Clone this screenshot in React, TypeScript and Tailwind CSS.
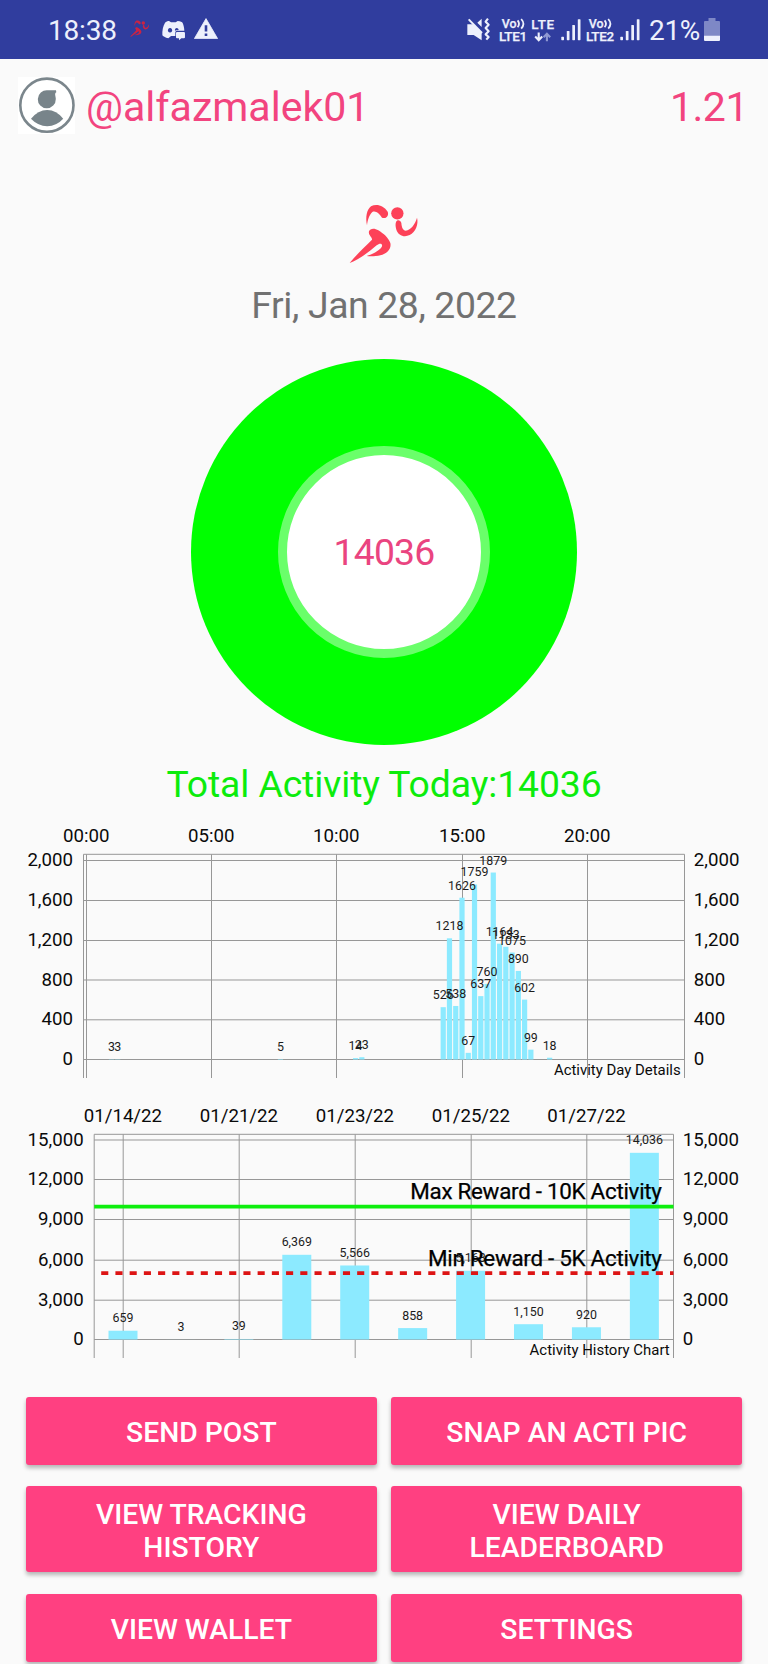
import { ReactNode } from 'react';

interface BarEntry {
  slot: number;
  value: number;
}

interface AxisTick {
  y: number;
  label: string;
}

interface TimeTick {
  x: number;
  label: string;
}

interface LimitLine {
  y: number;
  label: string;
  color: string;
  dashed?: boolean;
}

interface ActivityChartProps {
  entries: BarEntry[];
  firstX: number;
  slotWidth: number;
  barWidth: number;
  pxPerUnit: number;
  left: number;
  right: number;
  yTicks: AxisTick[];
  xTicks: TimeTick[];
  limits?: LimitLine[];
  description: string;
  labelGap: number;
  grouped?: boolean;
}

// Steps per 15 minute slot of the day
const dayEntries: BarEntry[] = [
  { slot: 4, value: 3 },
  { slot: 5, value: 3 },
  { slot: 31, value: 5 },
  { slot: 43, value: 14 },
  { slot: 44, value: 23 },
  { slot: 57, value: 526 },
  { slot: 58, value: 1218 },
  { slot: 59, value: 538 },
  { slot: 60, value: 1626 },
  { slot: 61, value: 67 },
  { slot: 62, value: 1759 },
  { slot: 63, value: 637 },
  { slot: 64, value: 760 },
  { slot: 65, value: 1879 },
  { slot: 66, value: 1164 },
  { slot: 67, value: 1133 },
  { slot: 68, value: 1075 },
  { slot: 69, value: 890 },
  { slot: 70, value: 602 },
  { slot: 71, value: 99 },
  { slot: 74, value: 18 }
];

const historyEntries: BarEntry[] = [659, 3, 39, 6369, 5566, 858, 5168, 1150, 920, 14036].map(
  (value, slot) => ({ slot, value })
);

const dayYTicks: AxisTick[] = [
  { y: 50.5, label: '2,000' },
  { y: 90.5, label: '1,600' },
  { y: 130.5, label: '1,200' },
  { y: 170, label: '800' },
  { y: 209.8, label: '400' },
  { y: 249.5, label: '0' }
];

const historyYTicks: AxisTick[] = [
  { y: 50, label: '15,000' },
  { y: 89.5, label: '12,000' },
  { y: 129.5, label: '9,000' },
  { y: 170.2, label: '6,000' },
  { y: 210.2, label: '3,000' },
  { y: 249.5, label: '0' }
];

const dayXTicks: TimeTick[] = [
  { x: 86.5, label: '00:00' },
  { x: 211.5, label: '05:00' },
  { x: 336.5, label: '10:00' },
  { x: 462.5, label: '15:00' },
  { x: 587.5, label: '20:00' }
];

const historyXTicks: TimeTick[] = [
  { x: 123.2, label: '01/14/22' },
  { x: 239.2, label: '01/21/22' },
  { x: 355.2, label: '01/23/22' },
  { x: 471.2, label: '01/25/22' },
  { x: 586.8, label: '01/27/22' }
];

const historyLimits: LimitLine[] = [
  { y: 116.6, label: 'Max Reward - 10K Activity', color: '#0eee0e' },
  { y: 183.1, label: 'Min Reward - 5K Activity', color: '#dd1414', dashed: true }
];

const BASELINE = 249.5;

const ActivityChart = ({
  entries,
  firstX,
  slotWidth,
  barWidth,
  pxPerUnit,
  left,
  right,
  yTicks,
  xTicks,
  limits = [],
  description,
  labelGap,
  grouped = false
}: ActivityChartProps) => {
  return (
    <svg width="768" height="280" viewBox="0 0 768 280" className="block">
      {/* grid */}
      <g stroke="#979797" strokeWidth="1">
        <path d={`M${left} 268V44.3H${right}V268`} fill="none" />
        {yTicks.map((tick) => (
          <line key={tick.label} x1={left} x2={right} y1={tick.y} y2={tick.y} />
        ))}
        {xTicks.map((tick) => (
          <line key={tick.label} x1={tick.x} x2={tick.x} y1={44.3} y2={268} />
        ))}
      </g>

      {/* bars */}
      {entries.map(({ slot, value }) => (
        <rect
          key={slot}
          x={firstX + slot * slotWidth - barWidth / 2}
          y={BASELINE - value * pxPerUnit}
          width={barWidth}
          height={value * pxPerUnit}
          fill="#8ceaff"
        />
      ))}

      {/* axis labels */}
      <g fontSize="18.67" fill="#0a0a0a">
        {xTicks.map((tick) => (
          <text key={tick.label} x={tick.x - 0.3} y={32} textAnchor="middle">
            {tick.label}
          </text>
        ))}
        {yTicks.map((tick) => (
          <text key={tick.label} x={left - 10.5} y={tick.y + 5.6} textAnchor="end">
            {tick.label}
          </text>
        ))}
        {yTicks.map((tick) => (
          <text key={tick.label} x={right + 9.3} y={tick.y + 5.6}>
            {tick.label}
          </text>
        ))}
      </g>

      {/* values */}
      <g fontSize="12.4" fill="#1c1c1c" textAnchor="middle">
        {entries.map(({ slot, value }) => (
          <text key={slot} x={firstX + slot * slotWidth} y={BASELINE - value * pxPerUnit - labelGap}>
            {grouped ? value.toLocaleString('en-US') : value}
          </text>
        ))}
      </g>

      {limits.map((limit) => (
        <g key={limit.label}>
          <line
            x1={limit.dashed ? left + 7 : left}
            x2={right}
            y1={limit.y}
            y2={limit.y}
            stroke={limit.color}
            strokeWidth="3.7"
            strokeDasharray={limit.dashed ? '7.1 7.12' : undefined}
          />
          <text
            x={right - 11.8}
            y={limit.y - 7.2}
            textAnchor="end"
            fontSize="22.4"
            letterSpacing="-0.28"
            fill="#000"
            stroke="#000"
            strokeWidth="0.25"
          >
            {limit.label}
          </text>
        </g>
      ))}

      <text x={right - 3.8} y={265} textAnchor="end" fontSize="14.93" fill="#0a0a0a">
        {description}
      </text>
    </svg>
  );
};

const RunnerIcon = ({ className }: { className: string }) => (
  <svg viewBox="355 38 215 185" fill="currentColor" className={className}>
    <circle cx="503" cy="69" r="18.5" />
    <path d="M412 105C407 80 411 58 424 48C440 39 462 45 474 64C479 76 468 87 457 82C449 70 438 60 428 65C418 74 414 90 412 105Z" />
    <path d="M499 95C502 88 512 88 515 98C516 112 520 120 528 121C544 118 556 102 562 82C567 102 558 124 540 134C524 142 506 136 500 118C497 108 497 100 499 95Z" />
    <path d="M418 123C421 114 434 112 446 120C462 130 476 142 482 158C486 176 472 190 452 195C440 198 420 199 411 197C428 191 446 184 456 170C461 159 450 157 441 165C424 180 392 206 360 218C378 196 402 172 427 148C428 140 415 134 418 123Z" />
  </svg>
);

const DiscordIcon = () => (
  <svg viewBox="485 60 71 62" fill="currentColor" className="h-[20.6px] w-[23.7px]">
    <path
      fillRule="evenodd"
      d="M506 63L512 67H526L532 63C540 64 546 66 547 69C550 76 552 84 552 92H530Q525 92 525 97V108H512L504 115C495 113 487 109 486 106C485 92 488 78 494 68C497 65 502 63 506 63ZM509 84a6.5 7 0 1 0 0.1 0ZM530 84a6 6 0 0 0-6 8l4-1 7-1a6 6 0 0 0-5-6Z"
    />
    <path d="M530 96H551Q554 96 554 99V112Q554 115 551 115H543L536 121V115H530Q527 115 527 112V99Q527 96 530 96Z" />
  </svg>
);

const WarningIcon = () => (
  <svg viewBox="0 0 24 21" className="h-[21px] w-6">
    <path d="M12 .6L23.6 20.6H.4Z" fill="currentColor" stroke="currentColor" strokeWidth=".8" strokeLinejoin="round" />
    <path d="M12 7.2V13.4M12 15.4V18" stroke="#303d9e" strokeWidth="2.6" />
  </svg>
);

const MuteVibrateIcon = () => (
  <svg viewBox="248 54 70 68" className="h-[22.7px] w-[23.3px]">
    <path d="M249 73H266L292 96V121L268 105H249ZM279 68L292 56V81Z" fill="currentColor" />
    <path d="M253 58L293 99" stroke="currentColor" strokeWidth="6" />
    <path
      d="M311 56L304 65L313 74L304 84L313 94L304 103L313 111L306 119"
      fill="none"
      stroke="currentColor"
      strokeWidth="6.5"
      strokeLinejoin="round"
    />
  </svg>
);

const SignalIcon = () => (
  <svg viewBox="0 0 20 22" fill="currentColor" className="h-[22px] w-5">
    <rect x="0.3" y="17.8" width="2.7" height="3.4" rx=".6" />
    <rect x="5.8" y="12" width="2.7" height="9.2" rx=".6" />
    <rect x="11.3" y="6" width="2.7" height="15.2" rx=".6" />
    <rect x="16.8" y="0.2" width="2.7" height="21" rx=".6" />
  </svg>
);

const VolteBadge = ({ label }: { label: string }) => (
  <svg viewBox="0 0 30 24" width="30" height="24" fill="currentColor" fontWeight="500" className="overflow-visible">
    <text x="2.8" y="10" fontSize="12.4" stroke="currentColor" strokeWidth=".25">
      Vo
    </text>
    <path
      d="M18.6 2.4Q21.4 5.8 18.6 9.2M22.2 1Q26.6 5.8 22.2 10.6"
      fill="none"
      stroke="currentColor"
      strokeWidth="1.8"
    />
    <text x="0" y="22.6" fontSize="13.4" stroke="currentColor" strokeWidth=".25" textLength="28.2">
      {label}
    </text>
  </svg>
);

const LteIcon = () => (
  <svg viewBox="0 0 24 24" width="24" height="24" className="overflow-visible">
    <text
      x="0.2"
      y="10.6"
      fontSize="13.4"
      fontWeight="500"
      fill="currentColor"
      stroke="currentColor"
      strokeWidth=".25"
      textLength="23"
    >
      LTE
    </text>
    <path d="M7.7 14.5V22M4.2 18.6L7.7 22.2L11.2 18.6" fill="none" stroke="currentColor" strokeWidth="2.1" />
    <path d="M15.9 23.3V15.8M12.6 19.2L15.9 15.8L19.2 19.2" fill="none" stroke="#8f98d2" strokeWidth="2.1" />
  </svg>
);

const BatteryIcon = () => (
  <svg viewBox="0 0 16 23" className="h-[23px] w-4">
    <path d="M4.5 0H11.5V3H15Q16 3 16 4V18H0V4Q0 3 1 3H4.5Z" fill="#7e88c6" />
    <path d="M0 17.8H16V22Q16 23 15 23H1Q0 23 0 22Z" fill="currentColor" />
  </svg>
);

const StatusBar = () => (
  <div className="flex h-[59px] items-start bg-[#303d9e] pl-[48px] pr-[48px] pt-[18px] text-[#edf0fc]">
    <span className="mt-[-3px] w-[81px] text-[28px] leading-[32px] tracking-[-0.2px]">18:38</span>
    <RunnerIcon className="mt-[2px] h-[17.5px] w-[21px] text-[#cb2343]" />
    <div className="ml-[11.5px] mt-[2px]">
      <DiscordIcon />
    </div>
    <div className="ml-[9px]">
      <WarningIcon />
    </div>
    <div className="ml-auto flex items-start">
      <MuteVibrateIcon />
      <div className="ml-[8px] flex items-start">
        <VolteBadge label="LTE1" />
      </div>
      <div className="ml-[2.6px]">
        <LteIcon />
      </div>
      <div className="ml-[5.5px] mt-[1px]">
        <SignalIcon />
      </div>
      <div className="ml-[5px]">
        <VolteBadge label="LTE2" />
      </div>
      <div className="ml-[4px] mt-[1px]">
        <SignalIcon />
      </div>
      <span className="ml-[9.2px] mt-[-3px] w-[55px] text-[28px] leading-[32px] tracking-[-0.3px]">21%</span>
      <BatteryIcon />
    </div>
  </div>
);

const Avatar = () => (
  <svg viewBox="0 0 57 57" className="h-[57px] w-[57px] bg-white">
    <circle cx="28.9" cy="28.2" r="26.6" fill="#fff" stroke="#7b868c" strokeWidth="2.6" />
    <g fill="#78848a">
      <path d="M38 13.3H29.5A9 9 0 1 0 37.8 22C37.9 19 36 16.4 38.3 15.2Z" />
      <path d="M13 41.8Q20 33 29.2 33Q38.5 33 45.2 41.8Q38.5 49.2 29.2 49.2Q20 49.2 13 41.8Z" />
    </g>
  </svg>
);

const ActionButton = ({ children }: { children: ReactNode }) => (
  <button className="rounded-[3px] bg-[#ff4081] px-10 pt-1 text-center text-[28.3px] font-medium leading-[33.8px] text-white shadow-[0_3px_4px_rgba(0,0,0,0.28)]">
    {children}
  </button>
);

const App = () => {
  return (
    <div className="h-[1664px] w-[768px] overflow-hidden bg-[#fafafa] font-['Roboto',sans-serif]">
      <StatusBar />

      <div className="flex items-start pl-[17.5px] pr-5 pt-[18px] text-[41.1px] leading-[48px] text-[#f2447f]">
        <Avatar />
        <span className="ml-[11.5px] mt-[6px]">@alfazmalek01</span>
        <span className="ml-auto mt-[6px] tracking-[-0.5px]">1.21</span>
      </div>

      <div className="mt-[68.7px] flex flex-col items-center">
        <RunnerIcon className="h-[61.7px] w-[71.7px] text-[#fd4158]" />
        <p className="mt-[18.6px] text-[37.33px] leading-[44px] tracking-[-0.37px] text-[#717171]">
          Fri, Jan 28, 2022
        </p>

        <div className="mt-8 flex size-[386px] items-center justify-center rounded-full bg-[#00ff00]">
          <div className="flex size-[212px] items-center justify-center rounded-full border-[9.7px] border-[#6aff6a] bg-white pt-[2px] text-[37.33px] tracking-[-0.8px] text-[#ea4480]">
            14036
          </div>
        </div>

        <p className="mt-[17px] text-[37.33px] leading-[44px] tracking-[-0.1px] text-[#0cec0c]">
          Total Activity Today:14036
        </p>
      </div>

      <div className="mt-1">
        <ActivityChart
          entries={dayEntries}
          firstX={86.4}
          slotWidth={6.26}
          barWidth={5.2}
          pxPerUnit={0.0995}
          left={83.5}
          right={684.5}
          yTicks={dayYTicks}
          xTicks={dayXTicks}
          description="Activity Day Details"
          labelGap={8}
        />
        <ActivityChart
          entries={historyEntries}
          firstX={123}
          slotWidth={57.93}
          barWidth={29}
          pxPerUnit={0.0133}
          left={94.2}
          right={673.5}
          yTicks={historyYTicks}
          xTicks={historyXTicks}
          limits={historyLimits}
          description="Activity History Chart"
          labelGap={8.5}
          grouped
        />
      </div>

      <div className="mt-[27px] grid grid-cols-2 grid-rows-[68px_86px_68px] gap-x-[14px] gap-y-[21.5px] px-[25.7px]">
        <ActionButton>SEND POST</ActionButton>
        <ActionButton>SNAP AN ACTI PIC</ActionButton>
        <ActionButton>
          VIEW TRACKING
          <br />
          HISTORY
        </ActionButton>
        <ActionButton>
          VIEW DAILY
          <br />
          LEADERBOARD
        </ActionButton>
        <ActionButton>VIEW WALLET</ActionButton>
        <ActionButton>SETTINGS</ActionButton>
      </div>
    </div>
  );
};

export default App;
